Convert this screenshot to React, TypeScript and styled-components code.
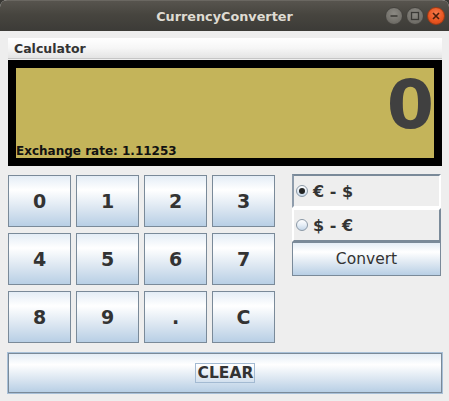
import React from "react";
import styled, { createGlobalStyle } from "styled-components";

const Global = createGlobalStyle`
  html, body { margin: 0; padding: 0; background: #3a3935; }
  body { font-family: "DejaVu Sans", "Liberation Sans", sans-serif; }
  * { box-sizing: border-box; }
`;

const Window = styled.div`
  width: 449px;
  height: 401px;
  background: #eeeeee;
  border-radius: 7px 7px 0 0;
  overflow: hidden;
  display: flex;
  flex-direction: column;
`;

const TitleBar = styled.div`
  height: 31px;
  flex: none;
  position: relative;
  display: flex;
  align-items: center;
  justify-content: center;
  background: linear-gradient(to bottom, #57544e 0%, #47453f 45%, #3c3b37 100%);
  border-top: 1px solid #6a6761;
`;

const Title = styled.div`
  font-family: "DejaVu Sans", sans-serif;
  font-weight: bold;
  font-size: 12.8px;
  color: #dfdbd2;
  letter-spacing: 0;
`;

const WinButtons = styled.div`
  position: absolute;
  right: 4px;
  top: 6px;
  display: flex;
  gap: 3px;
`;

const WinButton = styled.div<{ $close?: boolean }>`
  width: 18px;
  height: 18px;
  border-radius: 50%;
  display: flex;
  align-items: center;
  justify-content: center;
  background: ${(p) =>
    p.$close
      ? "radial-gradient(circle at 50% 35%, #f47a4c 0%, #e9541f 60%, #c8441a 100%)"
      : "radial-gradient(circle at 50% 35%, #8b8983 0%, #74726c 60%, #5f5d58 100%)"};
  border: 1px solid ${(p) => (p.$close ? "#9e3a14" : "#44423e")};
`;

const Content = styled.div`
  flex: 1;
  display: flex;
  flex-direction: column;
  padding: 7px 7px 0 8px;
`;

const Header = styled.div`
  height: 21px;
  margin-bottom: 1px;
  display: flex;
  align-items: center;
  padding-left: 6px;
  font-weight: bold;
  font-size: 12.5px;
  color: #333333;
  background: linear-gradient(to bottom, #ffffff 0%, #f6f6f6 50%, #e4e4e4 100%);
  border-bottom: 1px solid #c6c6c6;
`;

const Display = styled.div`
  height: 106px;
  border: 8px solid #000000;
  background: #c4b45a;
  display: flex;
  flex-direction: column;
  justify-content: space-between;
`;

const BigValue = styled.div`
  margin-top: 3px;
  text-align: right;
  font-weight: bold;
  font-size: 68px;
  line-height: 68px;
  color: #404040;
  padding-right: 0px;
`;

const Rate = styled.div`
  font-weight: bold;
  font-size: 12px;
  line-height: 14px;
  color: #111111;
`;

const Main = styled.div`
  margin-top: 9px;
  display: flex;
  gap: 17px;
  align-items: flex-start;
`;

const Keypad = styled.div`
  display: grid;
  grid-template-columns: repeat(4, 63px);
  grid-auto-rows: 52px;
  column-gap: 5px;
  row-gap: 6px;
`;

const gradient = "linear-gradient(to bottom, #e4edf6 0%, #ffffff 28%, #dbe6f1 65%, #b8cfe5 100%)";

const KeyButton = styled.button`
  margin: 0;
  padding: 0;
  border: 1px solid #7a8a99;
  background: ${gradient};
  font-family: "DejaVu Sans", sans-serif;
  font-weight: bold;
  font-size: 19px;
  color: #333333;
  display: flex;
  align-items: center;
  justify-content: center;
`;

const Side = styled.div`
  margin-top: -1px;
  width: 149px;
  display: flex;
  flex-direction: column;
`;

const RadioRow = styled.div<{ $raised?: boolean }>`
  height: 34px;
  display: flex;
  align-items: center;
  gap: 5px;
  padding-left: 2px;
  background: #eeeeee;
  border-style: solid;
  border-width: 2px;
  border-color: ${(p) =>
    p.$raised
      ? "#ffffff #7a8a99 #7a8a99 #ffffff"
      : "#7a8a99 #ffffff #ffffff #8e9cab"};
  font-weight: bold;
  font-size: 16px;
  color: #333333;
`;

const RadioDot = styled.span<{ $checked?: boolean }>`
  width: 12px;
  height: 12px;
  border-radius: 50%;
  border: 1px solid #8a98a6;
  background: linear-gradient(to bottom, #ffffff 0%, #e6eef6 50%, #c4d6e8 100%);
  display: flex;
  align-items: center;
  justify-content: center;
  flex: none;
  &::after {
    content: "";
    width: 6px;
    height: 6px;
    border-radius: 50%;
    background: ${(p) => (p.$checked ? "#222222" : "transparent")};
  }
`;

const ConvertButton = styled.button`
  height: 34px;
  margin: 0;
  padding: 0;
  border: 1px solid #7a8a99;
  background: ${gradient};
  font-family: "DejaVu Sans", sans-serif;
  font-size: 15.5px;
  color: #333333;
`;

const ClearButton = styled.button`
  margin-top: 10px;
  width: 434px;
  height: 40px;
  padding: 0;
  border: 1px solid #7a8a99;
  outline: 1px solid #a8c0d8;
  outline-offset: 0;
  box-shadow: 0 0 0 1px #a8c0d8;
  background: ${gradient};
  display: flex;
  align-items: center;
  justify-content: center;
`;

const ClearLabel = styled.span`
  border: 1px solid #a3bad2;
  padding: 0 1px 0 2px;
  height: 20px;
  display: flex;
  align-items: center;
  font-family: "DejaVu Sans", sans-serif;
  font-weight: bold;
  font-size: 15.5px;
  color: #333333;
`;

const keys = ["0", "1", "2", "3", "4", "5", "6", "7", "8", "9", ".", "C"];

export default function App() {
  return (
    <>
      <Global />
      <Window>
        <TitleBar>
          <Title>CurrencyConverter</Title>
          <WinButtons>
            <WinButton>
              <svg width="10" height="10" viewBox="0 0 10 10">
                <path d="M1.5 5 H8.5" stroke="#3a3935" strokeWidth="1.6" />
              </svg>
            </WinButton>
            <WinButton>
              <svg width="10" height="10" viewBox="0 0 10 10">
                <rect x="1.5" y="1.5" width="7" height="7" fill="none" stroke="#3a3935" strokeWidth="1.3" />
              </svg>
            </WinButton>
            <WinButton $close>
              <svg width="10" height="10" viewBox="0 0 10 10">
                <path d="M2 2 L8 8 M8 2 L2 8" stroke="#4a1e0c" strokeWidth="1.6" />
              </svg>
            </WinButton>
          </WinButtons>
        </TitleBar>
        <Content>
          <Header>Calculator</Header>
          <Display>
            <BigValue>0</BigValue>
            <Rate>Exchange rate: 1.11253</Rate>
          </Display>
          <Main>
            <Keypad>
              {keys.map((k) => (
                <KeyButton key={k}>{k}</KeyButton>
              ))}
            </Keypad>
            <Side>
              <RadioRow>
                <RadioDot $checked />
                <span>€ - $</span>
              </RadioRow>
              <RadioRow $raised>
                <RadioDot />
                <span>$ - €</span>
              </RadioRow>
              <ConvertButton>Convert</ConvertButton>
            </Side>
          </Main>
          <ClearButton>
            <ClearLabel>CLEAR</ClearLabel>
          </ClearButton>
        </Content>
      </Window>
    </>
  );
}
